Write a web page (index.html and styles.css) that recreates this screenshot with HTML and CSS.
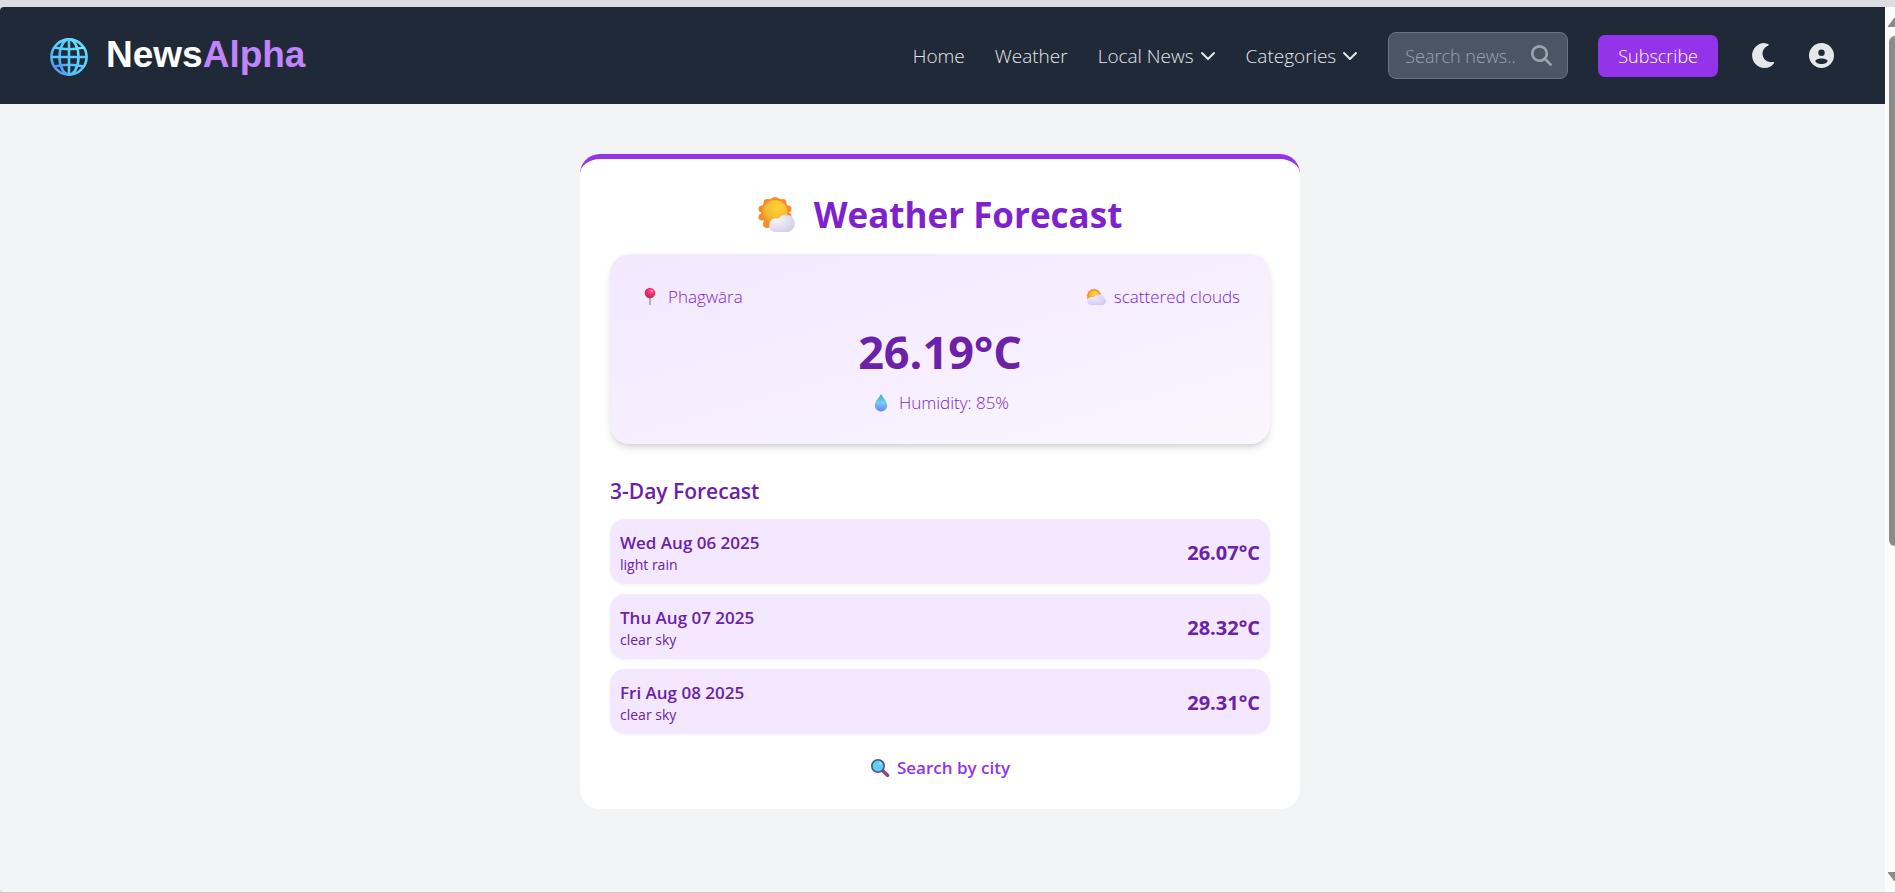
FILE: index.html
```html
<!DOCTYPE html>
<html lang="en">
<head>
<meta charset="utf-8">
<meta name="viewport" content="width=device-width, initial-scale=1">
<title>NewsAlpha - Weather Forecast</title>
<link rel="stylesheet" href="styles.css">
</head>
<body>
<svg class="defs" width="0" height="0" aria-hidden="true">
  <defs>
    <linearGradient id="globe-stroke" x1="1" y1="0" x2="0" y2="1"><stop offset="0" stop-color="#6fe3fb"/><stop offset=".6" stop-color="#55c4fa"/><stop offset="1" stop-color="#4f8df5"/></linearGradient>
    <radialGradient id="sun" cx=".6" cy=".3" r=".8"><stop offset="0" stop-color="#fdd43a"/><stop offset=".6" stop-color="#f5b82e"/><stop offset="1" stop-color="#e08a25"/></radialGradient>
    <radialGradient id="cloud" cx=".3" cy=".3" r=".9"><stop offset="0" stop-color="#f6f4fa"/><stop offset=".6" stop-color="#e0dcec"/><stop offset="1" stop-color="#cdc6e8"/></radialGradient>
    <radialGradient id="cloud-lilac" cx=".3" cy=".3" r=".9"><stop offset="0" stop-color="#eeeaff"/><stop offset="1" stop-color="#cfc4fb"/></radialGradient>
    <radialGradient id="pin" cx=".65" cy=".3" r=".8"><stop offset="0" stop-color="#ff5f8d"/><stop offset=".5" stop-color="#f4286a"/><stop offset="1" stop-color="#b92757"/></radialGradient>
    <linearGradient id="drop" x1="0" y1="0" x2="0" y2="1"><stop offset="0" stop-color="#4f9fc9"/><stop offset=".5" stop-color="#72cdf8"/><stop offset="1" stop-color="#6f7cf8"/></linearGradient>
  </defs>
</svg>
<div class="window">
  <div class="page">
    <header class="header">
      <a class="brand" href="#">
        <svg class="brand-icon" viewBox="0 0 38 38" fill="none" stroke="#58cbfb" stroke-width="2.6" aria-hidden="true">
          <g stroke="url(#globe-stroke)"><circle cx="19" cy="19" r="17.6"/>
          <ellipse cx="19" cy="19" rx="9.500" ry="17.6"/>
          <path d="M4.500 9.600Q19 12.800 33.500 9.600M4.500 28.400Q19 25.200 33.500 28.400"/></g>
          <path d="M19 1.400V36.600M1.400 19H36.600"/>
        </svg>
        <span class="brand-name">News<span class="brand-accent">Alpha</span></span>
      </a>
      <nav class="nav">
        <a class="nav-link" href="#">Home</a>
        <a class="nav-link" href="#">Weather</a>
        <button class="nav-link" type="button">Local News
          <svg class="chevron" viewBox="0 0 16 16" aria-hidden="true"><path d="M2 5l6 6 6-6"/></svg>
        </button>
        <button class="nav-link" type="button">Categories
          <svg class="chevron" viewBox="0 0 16 16" aria-hidden="true"><path d="M2 5l6 6 6-6"/></svg>
        </button>
        <form class="search">
          <input class="search-input" type="text" placeholder="Search news.." aria-label="Search news">
          <button class="search-button" type="button" aria-label="Search">
            <svg viewBox="0 0 512 512" fill="currentColor" aria-hidden="true"><path d="M416 208c0 45.900-14.900 88.300-40 122.700l126.600 126.700c12.500 12.500 12.500 32.800 0 45.300s-32.800 12.500-45.300 0L330.700 376C296.300 401.100 253.900 416 208 416 93.100 416 0 322.900 0 208S93.100 0 208 0s208 93.100 208 208zM208 352a144 144 0 1 0 0-288 144 144 0 1 0 0 288z"/></svg>
          </button>
        </form>
        <button class="subscribe" type="button">Subscribe</button>
        <button class="icon-button" type="button" aria-label="Dark mode">
          <svg viewBox="0 0 24 24" fill="currentColor" aria-hidden="true"><path d="M17.800 1.200A12 12 0 0 0 13.500 0C7.400 0 2 5.400 2 12s5.300 12 12 12c4.100 0 7-1.800 9-4.600.4-.6.1-1.200-.8-1.100C16.500 19.200 12 15.200 12 10c0-3.200 1.800-6 5.600-7.700.6-.3.600-.8.200-1.100z"/></svg>
        </button>
        <button class="icon-button" type="button" aria-label="Account">
          <svg viewBox="0 0 24 24" fill="currentColor" fill-rule="evenodd" aria-hidden="true"><path d="M12 0a12 12 0 1 0 0 24 12 12 0 0 0 0-24zM12 6.200a3.100 3.100 0 1 1 0 6.200 3.100 3.100 0 0 1 0-6.200zM12 14.800c3.400 0 5.900 1.200 5.900 2.500S15.400 20.200 12 20.200s-5.900-1.600-5.900-2.900 2.500-2.500 5.900-2.500z"/></svg>
        </button>
      </nav>
    </header>
    <main class="main">
      <section class="card">
        <h1 class="title">
          <svg class="title-icon" viewBox="0 0 38 36" aria-hidden="true">
            <g fill="#f98b2c"><circle cx="17" cy="15" r="14"/><circle cx="17" cy="3.500" r="3.500"/><circle cx="25" cy="5.600" r="3.500"/><circle cx="9" cy="5.600" r="3.500"/><circle cx="30" cy="12" r="3.500"/><circle cx="4" cy="12" r="3.500"/><circle cx="30" cy="19" r="3.500"/><circle cx="4" cy="20" r="3.500"/><circle cx="9" cy="27" r="4"/></g>
            <circle cx="17" cy="15.500" r="12.500" fill="url(#sun)"/>
            <path fill="url(#cloud)" d="M17 35a7 7 0 0 1-1-13.500q2.500-.8 4.500.3A8.800 8.800 0 1 1 30 35z"/>
          </svg>
          Weather Forecast
        </h1>
        <div class="current">
          <div class="current-row">
            <p class="fact">
              <svg class="emoji" viewBox="0 0 20 20" aria-hidden="true"><path d="M10 10v8" stroke="#9d93a8" stroke-width="1.400"/><circle cx="10" cy="6" r="5.300" fill="url(#pin)"/><circle cx="11.800" cy="4" r="1.100" fill="#ffb5cc"/></svg>
              Phagwāra
            </p>
            <p class="fact">
              <svg class="emoji" viewBox="0 0 20 20" aria-hidden="true"><circle cx="8" cy="9" r="6.800" fill="#f78e2e" stroke="#f78e2e" stroke-width="1" stroke-dasharray="2 1.500"/><circle cx="8" cy="9" r="5.500" fill="url(#sun)"/><path d="M5 18a4 4 0 0 1-.4-7.900q1.700-.3 3 .5A6 6 0 0 1 18.400 11 3.900 3.900 0 0 1 15.600 18z" fill="url(#cloud-lilac)"/></svg>
              scattered clouds
            </p>
          </div>
          <p class="temperature">26.19°C</p>
          <p class="fact">
            <svg class="emoji" viewBox="0 0 20 20" aria-hidden="true"><path d="M10 1C8.400 4.500 3.800 8 3.800 12.600a6.200 5.900 0 0 0 12.400 0C16.200 8 11.600 4.500 10 1z" fill="url(#drop)"/></svg>
            Humidity: 85%
          </p>
        </div>
        <h2 class="subtitle">3-Day Forecast</h2>
        <ul class="forecast">
          <li class="day"><div><p class="date">Wed Aug 06 2025</p><p class="sky">light rain</p></div><span class="day-temp">26.07°C</span></li>
          <li class="day"><div><p class="date">Thu Aug 07 2025</p><p class="sky">clear sky</p></div><span class="day-temp">28.32°C</span></li>
          <li class="day"><div><p class="date">Fri Aug 08 2025</p><p class="sky">clear sky</p></div><span class="day-temp">29.31°C</span></li>
        </ul>
        <button class="city" type="button">
          <svg class="emoji" viewBox="0 0 20 20" aria-hidden="true"><path d="M12.500 12.500l5 4.800" stroke="#87497f" stroke-width="3.600" stroke-linecap="round"/><circle cx="8" cy="8" r="6.200" fill="#62cdec" stroke="#46548f" stroke-width="1.600"/><circle cx="10.300" cy="5.500" r="1.200" fill="#a9e6fa"/></svg>
          Search by city
        </button>
      </section>
    </main>
  </div>
  <div class="scrollbar" aria-hidden="true">
    <svg class="arrow" viewBox="0 0 14 10"><path d="M0 9L6 1h2l6 8v1H0z"/></svg>
    <div class="thumb"></div>
    <svg class="arrow" viewBox="0 0 14 10"><path d="M0 1L6 9h2l6-8V0H0z"/></svg>
  </div>
</div>
</body>
</html>
```
FILE: styles.css
```css
* { box-sizing: border-box; margin: 0; padding: 0; }

body {
  background: #dcdde1;
  color: #6b21a8;
  font-family: "Open Sans", "Noto Sans", sans-serif;
  font-size: 18px;
  font-weight: 300;
  line-height: 24px;
}

button, input { font: inherit; color: inherit; background: none; border: 0; }
button { cursor: pointer; }
a { color: inherit; text-decoration: none; }
ul { list-style: none; }
svg { display: block; flex: none; }
.defs { position: absolute; }

.window {
  display: flex;
  height: 100vh;
  padding-top: 7px;
  border-bottom: 1px solid #c8c8cb;
  overflow: hidden;
}

.page {
  flex: 1;
  background: #f3f4f6;
  border-radius: 4px 0 0 4px;
  overflow: hidden;
}

/* Header */
.header {
  display: flex;
  align-items: center;
  justify-content: space-between;
  height: 97px;
  padding: 0 49px 0 50px;
  background: #1f2937;
  color: #e5e7eb;
}

.brand { display: flex; align-items: center; gap: 18px; padding-top: 3px; }
.brand-icon { width: 38px; height: 38px; }
.brand-name {
  color: #fff;
  font: bold 37px/40px "Liberation Sans", Arial, sans-serif;
  padding-bottom: 4px;
}
.brand-accent { color: #c084fc; }

.nav { display: flex; align-items: center; gap: 30px; }
.nav-link { display: flex; align-items: center; gap: 6px; font-size: 19px; }
.chevron {
  width: 16px;
  height: 16px;
  fill: none;
  stroke: currentColor;
  stroke-width: 2;
  stroke-linecap: round;
  stroke-linejoin: round;
}

.search {
  display: flex;
  align-items: center;
  width: 180px;
  height: 47px;
  padding: 0 15px 0 16px;
  background: #4b5563;
  border: 1px solid #6b7280;
  border-radius: 8px;
}
.search-input { flex: 1; min-width: 0; height: 45px; outline: 0; }
.search-input::placeholder { color: #9ca3af; opacity: 1; }
.search-button { color: #9ca3af; }
.search-button svg { width: 21px; height: 21px; }

.subscribe {
  height: 42px;
  padding: 0 20px;
  border-radius: 7px;
  background: #9333ea;
  color: #fff;
}

.icon-button { padding: 0 2px; }
.icon-button svg { width: 25px; height: 25px; }

/* Weather card */
.main { padding: 50px 25px 50px 20px; }

.card {
  display: flex;
  flex-direction: column;
  max-width: 720px;
  margin: 0 auto;
  padding: 30px 30px 26px;
  background: #fff;
  border-top: 5px solid #9333ea;
  border-radius: 20px;
}

.title {
  display: flex;
  align-items: center;
  justify-content: center;
  gap: 18px;
  padding-top: 2px;
  margin-bottom: 15px;
  color: #7e22ce;
  font-size: 35px;
  font-weight: 700;
  line-height: 48px;
}
.title-icon { width: 38px; height: 36px; }

.current {
  display: flex;
  flex-direction: column;
  padding: 30px 30px 28px;
  background: linear-gradient(to bottom right, #f3e8ff, #faf5ff);
  border-radius: 20px;
  box-shadow: 0 5px 8px -1px rgba(0, 0, 0, .12), 0 3px 5px -2px rgba(0, 0, 0, .1);
}
.current-row { display: flex; justify-content: space-between; }
.fact {
  display: flex;
  align-items: center;
  justify-content: center;
  gap: 8px;
  color: #7e22ce;
  font-size: 17px;
  line-height: 26px;
}
.emoji { width: 20px; height: 20px; }
.temperature {
  margin: 14px 0 10px;
  font-size: 45px;
  font-weight: 700;
  line-height: 56px;
  text-align: center;
}

.subtitle {
  margin: 33px 0 14px;
  font-size: 21px;
  font-weight: 600;
  line-height: 28px;
}

.forecast { display: flex; flex-direction: column; gap: 10px; }
.day {
  display: flex;
  align-items: center;
  justify-content: space-between;
  padding: 11px 10px 9px;
  background: #f3e8ff;
  border-radius: 15px;
  box-shadow: 0 1px 3px rgba(0, 0, 0, .06);
}
.date { font-size: 17px; font-weight: 600; line-height: 25px; }
.sky { font-size: 14px; font-weight: 400; line-height: 20px; }
.day-temp { font-size: 20px; font-weight: 700; }

.city {
  display: flex;
  align-items: center;
  align-self: center;
  gap: 7px;
  margin-top: 19px;
  color: #9333ea;
  font-size: 17px;
  font-weight: 600;
  line-height: 30px;
}

/* Scroll bar */
.scrollbar {
  display: flex;
  flex-direction: column;
  width: 10px;
  padding: 10px 0;
  background: #fcfcfc;
  overflow: hidden;
}
.arrow { width: 14px; height: 10px; margin-left: 3px; fill: #8b8b8b; }
.thumb {
  width: 12px;
  height: 59%;
  margin: 9px 0 auto 4px;
  border-radius: 6px;
  background: #8b8b8b;
}
```
